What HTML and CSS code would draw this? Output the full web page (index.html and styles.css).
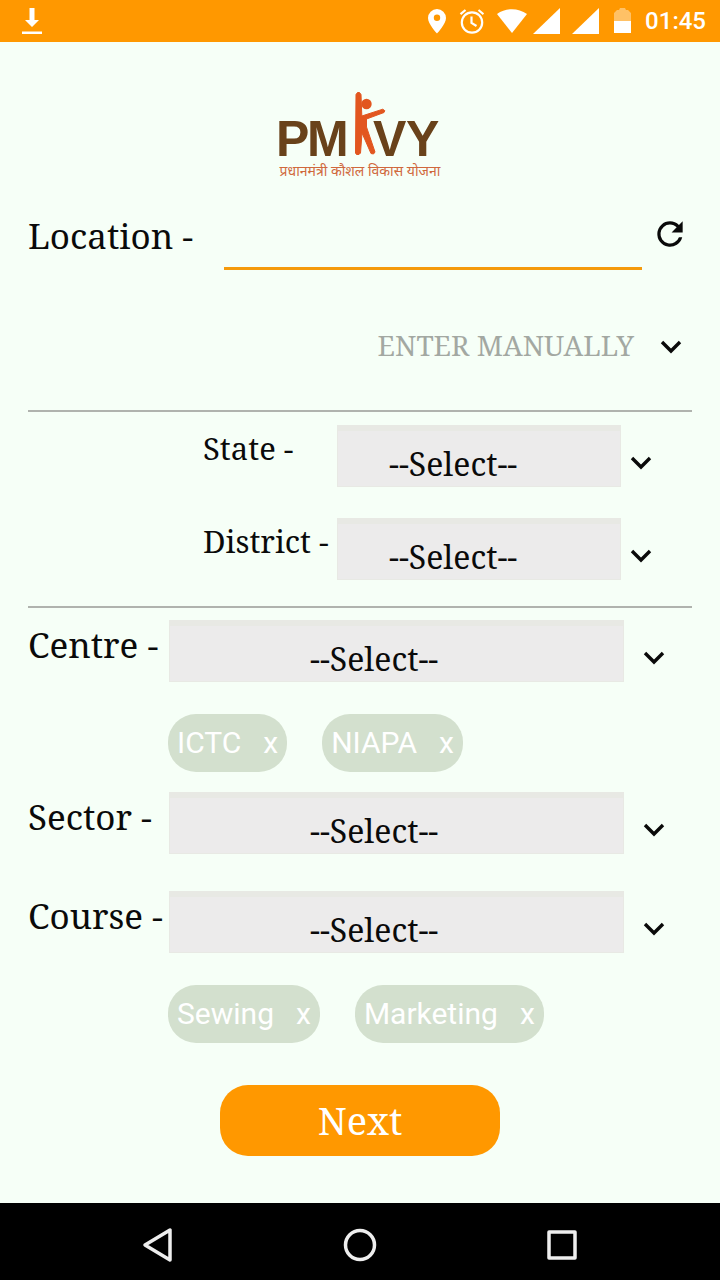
FILE: index.html
```html
<!DOCTYPE html>
<html lang="en">
<head>
<meta charset="utf-8">
<meta name="viewport" content="width=device-width, initial-scale=1">
<title>PMKVY</title>
<link rel="stylesheet" href="styles.css">
</head>
<body>
<svg class="defs" aria-hidden="true">
  <symbol id="chevron" viewBox="0 0 24 16"><path d="M3 3l9 9 9-9" fill="none" stroke="currentColor" stroke-width="3.4"/></symbol>
</svg>

<header class="status">
  <svg class="download" width="22" height="28" viewBox="0 0 22 28" fill="currentColor" aria-hidden="true"><path d="M8.500 1h5v12h4.500l-7 7-7-7h4.500zM1 24.500h20v2.500h-20z"/></svg>
  <div class="status-icons">
    <svg width="18" height="26" viewBox="0 0 18 26" fill="currentColor" aria-hidden="true"><path fill-rule="evenodd" d="M9 1a9 9 0 0 0-9 9c0 6 9 15.500 9 15.500S18 16 18 10a9 9 0 0 0-9-9zm0 5.500a3.200 3.200 0 1 1 0 6.400 3.200 3.200 0 0 1 0-6.400z"/></svg>
    <svg width="26" height="26" viewBox="0 0 26 26" fill="none" stroke="currentColor" stroke-width="2.200" aria-hidden="true"><circle cx="14" cy="14.500" r="10.200"/><path d="M13.500 8.500v6.500l5 3M2.500 6.200l5-4.200M25.500 6.200l-5-4.200"/></svg>
    <svg class="wifi" width="32" height="26" viewBox="0 0 32 26" fill="currentColor" aria-hidden="true"><path d="M1 6C10-.4 22-.4 31 6L16 25z"/></svg>
    <svg width="27" height="26" viewBox="0 0 27 26" fill="currentColor" aria-hidden="true"><path d="M27 0v26H0z"/></svg>
    <svg width="27" height="26" viewBox="0 0 27 26" fill="currentColor" aria-hidden="true"><path d="M27 0v26H0z"/></svg>
    <svg class="battery" width="17" height="26" viewBox="0 0 17 26" fill="currentColor" aria-hidden="true"><path opacity=".4" d="M0 13V5l3-3h2l1-2h5l1 2h2l3 3v8z"/><path d="M0 13h17v12H0z"/></svg>
    <time class="clock">01:45</time>
  </div>
</header>

<main class="page">
  <svg class="logo" width="172" height="90" viewBox="-4 0 172 90" role="img" aria-label="PMKVY">
    <g class="logo-word">
      <text x="-2" y="65">P</text>
      <text x="29" y="65">M</text>
      <text x="95" y="65">V</text>
      <text x="128" y="65">Y</text>
    </g>
    <path fill="#e2561f" stroke="#e2561f" stroke-linejoin="round" d="M78 3.500l1.500-2 2 0 1.500 2 .8 21.500 21-6.800 2 1.500-.8 1.800L88.500 28v8l8.500 25-1.500 2-2.500-.5L84 42l-1.500 20-1.500 1.500h-2.500L77.500 62z"/>
    <circle cx="88.500" cy="13" r="5.200" fill="#e2561f"/>
    <text class="logo-hindi" x="82" y="85" text-anchor="middle">प्रधानमंत्री कौशल विकास योजना</text>
  </svg>

  <form class="form">
    <div class="location">
      <label class="label" for="location">Location -</label>
      <input class="location-input" id="location" type="text">
      <button class="icon-button" type="button" aria-label="Refresh location">
        <svg width="38" height="38" viewBox="0 0 24 24" fill="currentColor" aria-hidden="true"><path d="M17.650 6.350A7.950 7.950 0 0 0 12 4a8 8 0 1 0 7.730 10h-2.080A6 6 0 1 1 12 6c1.660 0 3.140.69 4.220 1.780L13 11h7V4z"/></svg>
      </button>
    </div>

    <button class="manual" type="button">ENTER MANUALLY <svg class="chevron" aria-hidden="true"><use href="#chevron"/></svg></button>

    <div class="area">
      <div class="row row-narrow">
        <label class="label label-small" for="state">State -</label>
        <select class="select" id="state"><option>--Select--</option></select>
        <svg class="chevron" aria-hidden="true"><use href="#chevron"/></svg>
      </div>
      <div class="row row-narrow">
        <label class="label label-small" for="district">District -</label>
        <select class="select" id="district"><option>--Select--</option></select>
        <svg class="chevron" aria-hidden="true"><use href="#chevron"/></svg>
      </div>
    </div>

    <div class="row">
      <label class="label" for="centre">Centre -</label>
      <select class="select" id="centre"><option>--Select--</option></select>
      <svg class="chevron" aria-hidden="true"><use href="#chevron"/></svg>
    </div>
    <div class="chips">
      <span class="chip">ICTC <button class="chip-remove" type="button" aria-label="Remove ICTC">x</button></span>
      <span class="chip">NIAPA <button class="chip-remove" type="button" aria-label="Remove NIAPA">x</button></span>
    </div>

    <div class="row row-sector">
      <label class="label" for="sector">Sector -</label>
      <select class="select" id="sector"><option>--Select--</option></select>
      <svg class="chevron" aria-hidden="true"><use href="#chevron"/></svg>
    </div>
    <div class="row">
      <label class="label" for="course">Course -</label>
      <select class="select" id="course"><option>--Select--</option></select>
      <svg class="chevron" aria-hidden="true"><use href="#chevron"/></svg>
    </div>
    <div class="chips">
      <span class="chip">Sewing <button class="chip-remove" type="button" aria-label="Remove Sewing">x</button></span>
      <span class="chip">Marketing <button class="chip-remove" type="button" aria-label="Remove Marketing">x</button></span>
    </div>

    <button class="next" type="submit">Next</button>
  </form>
</main>

<nav class="navbar" aria-label="System">
  <button class="nav-button" type="button" aria-label="Back"><svg width="36" height="36" viewBox="0 0 36 36"><path d="M5 18L30 3v30z"/></svg></button>
  <button class="nav-button" type="button" aria-label="Home"><svg width="36" height="36" viewBox="0 0 36 36"><circle cx="18" cy="18" r="14.500"/></svg></button>
  <button class="nav-button" type="button" aria-label="Recent apps"><svg width="36" height="36" viewBox="0 0 36 36"><path d="M5 5h26v26H5z"/></svg></button>
</nav>
</body>
</html>
```

FILE: styles.css
```css
* {
  box-sizing: border-box;
}

body {
  margin: 0;
  min-height: 100vh;
  display: flex;
  flex-direction: column;
  background: #f6fff7;
  color: #0a0a0a;
  font-family: "Noto Serif", "Droid Serif", "DejaVu Serif Condensed", "DejaVu Serif", serif;
}

button,
input,
select {
  margin: 0;
  padding: 0;
  border: 0;
  border-radius: 0;
  background: none;
  color: inherit;
  font: inherit;
}

svg {
  display: block;
  flex: none;
}

.defs {
  position: absolute;
  width: 0;
  height: 0;
}

.status {
  display: flex;
  align-items: center;
  justify-content: space-between;
  height: 42px;
  padding: 0 14px 0 21px;
  background: #ff9800;
  color: #fff;
}

.status-icons {
  display: flex;
  align-items: center;
  gap: 12px;
}

.wifi {
  margin-right: -7px;
}

.battery {
  margin: 0 2px 0 3px;
}

.clock {
  font: 500 24px/42px Roboto, sans-serif;
}

.page {
  flex: 1;
  padding: 49px 28px 46px;
}

.logo {
  margin: 0 auto;
}

.logo-word {
  fill: #69421a;
  font: bold 50px "Liberation Sans", sans-serif;
}

.logo-hindi {
  fill: #d0683c;
  font: 14px "Noto Sans", "Noto Sans Devanagari", sans-serif;
}

.form {
  display: flex;
  flex-direction: column;
}

.location {
  display: grid;
  grid-template-columns: 196px 1fr 50px;
  margin-top: 30px;
}

.label {
  font-size: 35px;
  line-height: 50px;
  white-space: nowrap;
}

.label-small {
  font-size: 31px;
  line-height: 46px;
}

.location-input {
  width: 100%;
  height: 59px;
  border-bottom: 3px solid #f59a0c;
  font-size: 32px;
}

.icon-button {
  justify-self: end;
  width: 41px;
  height: 46px;
}

.manual {
  display: flex;
  align-items: center;
  justify-content: flex-end;
  gap: 25px;
  margin: 55px 9px 45px 0;
  align-self: flex-end;
  color: #a3a8a2;
  font-size: 28px;
  line-height: 40px;
}

.chevron {
  width: 24px;
  height: 16px;
  color: #0a0a0a;
}

.manual .chevron {
  margin-top: 3px;
}

.area {
  display: grid;
  gap: 31px;
  margin-bottom: 12px;
  padding: 13px 0 26px;
  border-top: 2px solid #b0b3ae;
  border-bottom: 2px solid #b0b3ae;
}

.row {
  display: grid;
  grid-template-columns: 141px 1fr 68px;
}

.row .chevron {
  align-self: center;
  margin: 14px 0 0 18px;
}

.select {
  appearance: none;
  width: 100%;
  height: 62px;
  padding: 10px 0 0 140px;
  border: 1px solid #e8e9e4;
  border-top-width: 6px;
  background: #ecebeb;
  font-size: 32px;
  line-height: 38px;
}

.row-narrow {
  grid-template-columns: 134px 1fr 71px;
  margin-left: 175px;
}

.row-narrow .select {
  padding-left: 51px;
}

.row-narrow .chevron {
  margin-left: 8px;
}

.chips {
  display: flex;
  flex-wrap: wrap;
  gap: 35px;
  margin: 32px 0 0 140px;
}

.row-sector {
  margin: 20px 0 37px;
}

.chip {
  display: flex;
  align-items: center;
  gap: 22px;
  height: 58px;
  padding: 0 9px;
  border-radius: 28px;
  background: #d3e0ce;
  color: #fff;
  font: 30px/58px Roboto, sans-serif;
}

.next {
  align-self: center;
  width: 280px;
  height: 71px;
  margin-top: 42px;
  border-radius: 28px;
  background: #ff9800;
  color: #fff;
  font-size: 38px;
  line-height: 71px;
}

.navbar {
  display: flex;
  justify-content: center;
  gap: 166px;
  padding: 24px 0 17px;
  background: #000;
}

.nav-button {
  width: 36px;
  height: 36px;
}

.nav-button svg {
  fill: none;
  stroke: #eee;
  stroke-width: 3.5;
  stroke-linejoin: round;
}
```
